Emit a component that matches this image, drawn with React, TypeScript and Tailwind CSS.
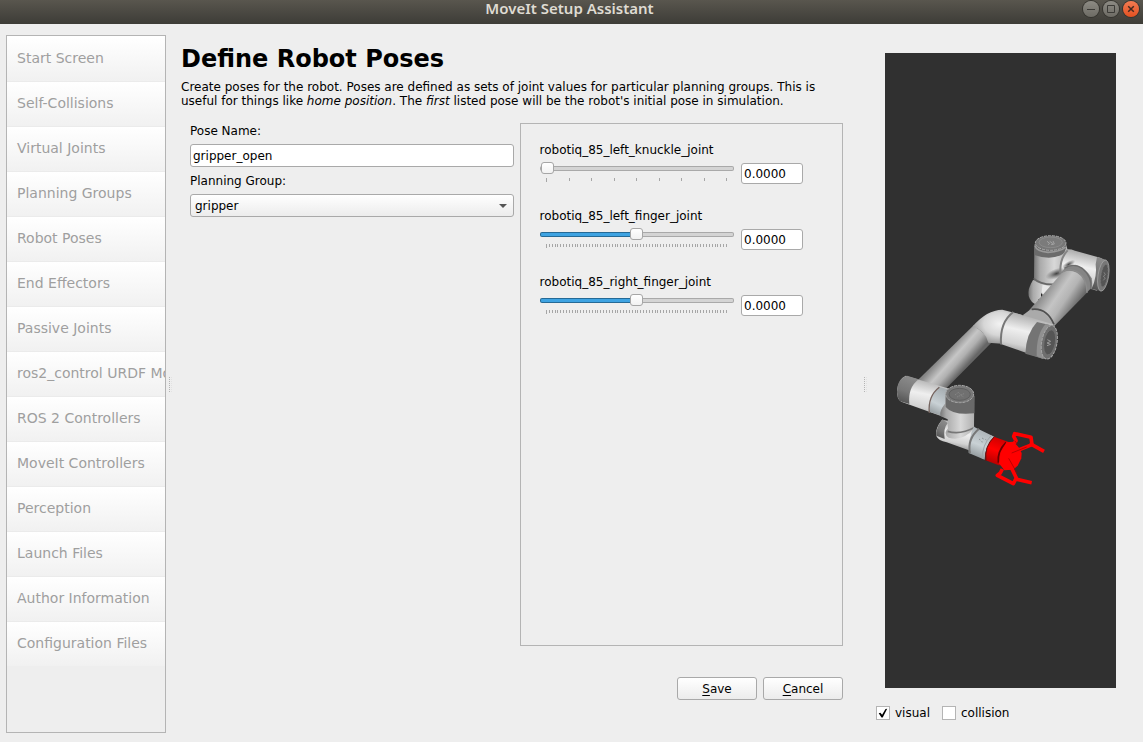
import { useState } from "react";
import type { CSSProperties } from "react";

const steps = [
  "Start Screen",
  "Self-Collisions",
  "Virtual Joints",
  "Planning Groups",
  "Robot Poses",
  "End Effectors",
  "Passive Joints",
  "ros2_control URDF Modifications",
  "ROS 2 Controllers",
  "MoveIt Controllers",
  "Perception",
  "Launch Files",
  "Author Information",
  "Configuration Files",
];

const joints = [
  { name: "robotiq_85_left_knuckle_joint", min: 0, max: 0.8, ticks: 8 },
  { name: "robotiq_85_left_finger_joint", min: -3.14, max: 3.14, ticks: 63 },
  { name: "robotiq_85_right_finger_joint", min: -3.14, max: 3.14, ticks: 63 },
];

const frame = "rounded-[3px] border border-[#a9a9a9]";
const raised = "bg-linear-to-b from-white to-[#ececec]";

function TitleBar() {
  const button =
    "flex size-4 items-center justify-center rounded-full bg-linear-to-b from-[#8d8b84] to-[#6d6b64] ring-1 ring-[#35342f]";
  return (
    <header className="grid h-6 grid-cols-[1fr_auto_1fr] items-start bg-linear-to-b from-[#59564e] to-[#3d3c37] pr-1">
      <h1 className="col-start-2 font-['Noto_Sans',sans-serif] text-[15px]/[16px] font-semibold text-[#dfdbd2]">
        MoveIt Setup Assistant
      </h1>
      <div className="flex justify-end gap-1 pt-px">
        <button aria-label="Minimize" className={button}>
          <svg viewBox="0 0 16 16" className="size-4" stroke="#3c3b37">
            <path d="M4 8.500h8" />
          </svg>
        </button>
        <button aria-label="Maximize" className={button}>
          <svg viewBox="0 0 16 16" className="size-4" fill="none" stroke="#3c3b37">
            <path d="M4.500 4.500h7v7h-7z" />
          </svg>
        </button>
        <button
          aria-label="Close"
          className="flex size-4 items-center justify-center rounded-full bg-linear-to-b from-[#f47b51] to-[#e2501f] ring-1 ring-[#35342f]"
        >
          <svg viewBox="0 0 16 16" className="size-4" stroke="#43291f" strokeWidth="1.5">
            <path d="M5.200 5.200l5.600 5.600M10.800 5.200l-5.600 5.600" />
          </svg>
        </button>
      </div>
    </header>
  );
}

function Splitter() {
  return (
    <div className="flex shrink-0 cursor-col-resize items-center pt-0.5">
      <svg viewBox="0 0 3 17" className="h-[17px] w-[3px]" fill="#b4b4b4" shapeRendering="crispEdges">
        {Array.from({ length: 8 }, (_, i) => (
          <g key={i}>
            <rect x="0" y={i * 2 + 1} width="1" height="1" />
            <rect x="2" y={i * 2 + 1} width="1" height="1" fill="#e2e2e2" />
          </g>
        ))}
      </svg>
    </div>
  );
}

function Joint({ name, min, max, ticks }: (typeof joints)[number]) {
  const [value, setValue] = useState(0);
  const fill = ((value - min) / (max - min)) * 100;
  return (
    <div>
      <label htmlFor={name}>{name}</label>
      <div className="mt-1.5 flex items-start gap-[7px]">
        <div className="min-w-0 flex-1">
          <input
            id={name}
            type="range"
            min={min}
            max={max}
            step={0.01}
            value={value}
            onChange={(e) => setValue(Number(e.target.value))}
            style={{ "--fill": `${fill}%` } as CSSProperties}
            className="-mt-px block h-3 w-full appearance-none bg-transparent [&::-webkit-slider-runnable-track]:h-[5px] [&::-webkit-slider-runnable-track]:rounded-[2px] [&::-webkit-slider-runnable-track]:border [&::-webkit-slider-runnable-track]:border-transparent [&::-webkit-slider-runnable-track]:[background:linear-gradient(to_right,#3ea3e2_var(--fill),#d4d4d4_var(--fill))_padding-box,linear-gradient(to_right,#256a96_var(--fill),#a9a9a9_var(--fill))_border-box] [&::-webkit-slider-thumb]:-mt-[5px] [&::-webkit-slider-thumb]:h-3 [&::-webkit-slider-thumb]:w-[13px] [&::-webkit-slider-thumb]:appearance-none [&::-webkit-slider-thumb]:rounded-[3px] [&::-webkit-slider-thumb]:border [&::-webkit-slider-thumb]:border-[#a6a6a6] [&::-webkit-slider-thumb]:bg-linear-to-b [&::-webkit-slider-thumb]:from-white [&::-webkit-slider-thumb]:to-[#f2f2f2]"
          />
          <svg
            viewBox="0 0 194 4"
            preserveAspectRatio="xMinYMin"
            className="mt-1 block h-1 w-full"
            fill="#a6a6a6"
            shapeRendering="crispEdges"
          >
            {Array.from({ length: ticks + 1 }, (_, i) => (
              <rect key={i} x={6 + Math.round((i * 180) / ticks)} y="0" width="1" height={i ? 3 : 4} />
            ))}
          </svg>
        </div>
        <input
          aria-label={`${name} value`}
          value={value.toFixed(4)}
          readOnly
          className={`${frame} h-[21px] w-[62px] bg-white px-0.5`}
        />
      </div>
    </div>
  );
}

function Check({ label, defaultChecked }: { label: string; defaultChecked?: boolean }) {
  return (
    <label className="flex items-center gap-[5px]">
      <span className="grid">
        <input
          type="checkbox"
          defaultChecked={defaultChecked}
          className="peer col-start-1 row-start-1 size-3.5 appearance-none border border-[#b4b4b4] bg-white"
        />
        <svg
          viewBox="0 0 14 14"
          className="pointer-events-none invisible col-start-1 row-start-1 size-3.5 peer-checked:visible"
        >
          <path d="M2.700 7.300l1.700-.6 1.700 2 3.400-5.700 1.700-.2-4.500 8.700H5.500z" fill="#000" />
        </svg>
      </span>
      {label}
    </label>
  );
}

function Robot() {
  return (
    <svg viewBox="0 -516 693 1905" className="h-full w-full" role="img" aria-label="Robot model">
      <defs>
        <linearGradient id="upright" x1="0" x2="1">
          <stop offset="0" stopColor="#777" />
          <stop offset=".18" stopColor="#aaa" />
          <stop offset=".6" stopColor="#d8d8d8" />
          <stop offset="1" stopColor="#b0b0b0" />
        </linearGradient>
        <linearGradient id="lying" x1=".35" y1="0" x2=".1" y2="1">
          <stop offset="0" stopColor="#aaa" />
          <stop offset=".35" stopColor="#efefef" />
          <stop offset=".65" stopColor="#d2d2d2" />
          <stop offset="1" stopColor="#666" />
        </linearGradient>
        <linearGradient id="upper" gradientUnits="userSpaceOnUse" x1="483" y1="196" x2="572" y2="256">
          <stop offset="0" stopColor="#8f8f8f" />
          <stop offset=".35" stopColor="#c4c4c4" />
          <stop offset=".6" stopColor="#b4b4b4" />
          <stop offset="1" stopColor="#5c5c5c" />
        </linearGradient>
        <linearGradient id="fore" gradientUnits="userSpaceOnUse" x1="180" y1="382" x2="236" y2="432">
          <stop offset="0" stopColor="#858585" />
          <stop offset=".4" stopColor="#c6c6c6" />
          <stop offset=".65" stopColor="#b0b0b0" />
          <stop offset="1" stopColor="#666" />
        </linearGradient>
        <linearGradient id="band" x1=".4" y1="0" x2=".1" y2="1">
          <stop offset="0" stopColor="#8a8a8a" />
          <stop offset=".5" stopColor="#777" />
          <stop offset="1" stopColor="#4d4d4d" />
        </linearGradient>
        <radialGradient id="bend" cx=".55" cy=".4" r=".65">
          <stop offset="0" stopColor="#f2f2f2" />
          <stop offset=".5" stopColor="#d6d6d6" />
          <stop offset="1" stopColor="#858585" />
        </radialGradient>
        <radialGradient id="shade">
          <stop offset="0" stopColor="#333" stopOpacity=".9" />
          <stop offset="1" stopColor="#555" stopOpacity="0" />
        </radialGradient>
        <linearGradient id="steel" x1=".4" y1="0" x2=".1" y2="1">
          <stop offset="0" stopColor="#a9b0b4" />
          <stop offset=".5" stopColor="#c9d1d5" />
          <stop offset="1" stopColor="#81888b" />
        </linearGradient>
        <linearGradient id="flange" x1=".5" y1="0" x2=".2" y2="1">
          <stop offset="0" stopColor="#c00" />
          <stop offset=".45" stopColor="#f00" />
          <stop offset="1" stopColor="#a00" />
        </linearGradient>
      </defs>

      {/* base */}
      <path d="M444 165Q427 192 431 213Q438 236 457 239L510 190L508 175Z" fill="url(#upright)" />
      <path d="M473 178Q490 187 505 183L480 215L470 200Z" fill="#e8e8e8" />
      <path d="M468 204v15l-9 5 6 8 14-17z" fill="#292929" />

      {/* shoulder */}
      <path d="M538 75Q552 70 570 77L648 99Q665 108 659 150Q650 190 635 197L555 170L505 155Z" fill="url(#lying)" />
      <path d="M636 96L665 105L648 199L620 191Q637 155 632 118Z" fill="url(#band)" />
      <path d="M448 62L447 165Q468 184 510 180L530 160L525 132Q527 105 548 75L543 58Z" fill="url(#upright)" />
      <ellipse cx="514" cy="146" rx="34" ry="15" transform="rotate(-20 514 146)" fill="url(#shade)" />
      <ellipse cx="551" cy="118" rx="22" ry="9" transform="rotate(-30 551 118)" fill="url(#shade)" />
      <path d="M548 76Q524 100 526 145" fill="none" stroke="#858585" strokeWidth="6" />
      <path d="M446 160Q467 180 509 178" fill="none" stroke="#686868" strokeWidth="5" />
      <path d="M448 57L448 90Q493 106 527 91Q545 83 543 55Z" fill="#6b6b6b" />
      <path d="M450 62Q454 79 489 82Q528 80 542 66" fill="none" stroke="#999" strokeWidth="5" />
      <ellipse cx="497" cy="54" rx="46" ry="22" fill="#777" stroke="#aaa" strokeWidth="3" strokeDasharray="9 3" />
      <ellipse cx="497" cy="52" rx="35" ry="16" fill="#7b7b7b" stroke="#929292" strokeWidth="2" />
      <path d="M486 49l8 6-5 4M494 49l9 6-5 4M504 48l4 9-8 2" fill="none" stroke="#a2a2a2" strokeWidth="3" />
      <ellipse cx="655" cy="152" rx="16" ry="47" transform="rotate(9 655 152)" fill="#777" stroke="#aaa" strokeWidth="2" />
      <ellipse cx="658" cy="152" rx="10" ry="34" transform="rotate(9 658 152)" fill="#555" stroke="#777" strokeWidth="2" strokeDasharray="6 3" />
      <path d="M657 142l4 7-6 5 6 5-6 7" fill="none" stroke="#999" strokeWidth="2" />

      {/* upper arm */}
      <path d="M528 143Q542 120 571 119Q604 129 620 160Q628 193 596 207L580 204Z" fill="#858585" />
      <path d="M528 147Q546 130 576 143Q606 160 605 204L508 303L420 270Z" fill="url(#upper)" />
      <path d="M533 140Q553 128 576 140Q606 158 606 204" fill="none" stroke="#8c8c8c" strokeWidth="4" />
      <path d="M538 130Q565 112 593 131Q622 155 618 193" fill="none" stroke="#6c6c6c" strokeWidth="4" />
      <path d="M413 271Q432 255 446 251Q486 258 507 300L480 314Z" fill="#aaa" />
      <path d="M440 253Q485 247 507 298" fill="none" stroke="#4f4f4f" strokeWidth="5" />

      {/* forearm and elbow */}
      <path d="M266 301L98 466L142 492L181 493L325 347Z" fill="url(#fore)" />
      <path d="M263 304Q305 255 352 254L410 269L382 360L350 356L310 353Q303 320 263 304Z" fill="url(#bend)" />
      <path d="M383 262L505 298L475 402L345 356Q344 294 383 262Z" fill="url(#lying)" />
      <path d="M385 261Q344 291 348 358" fill="none" stroke="#777" strokeWidth="6" />
      <path d="M456 291L510 304L476 402L421 386Q423 326 456 291Z" fill="#747474" />
      <path d="M482 297Q453 328 455 394L475 401L509 306Z" fill="#909090" />
      <ellipse cx="493" cy="352" rx="23" ry="51" transform="rotate(10 493 352)" fill="#6e6e6e" stroke="#a7a7a7" strokeWidth="3" strokeDasharray="9 3" />
      <ellipse cx="494" cy="352" rx="17" ry="38" transform="rotate(10 494 352)" fill="#555" stroke="#777" strokeWidth="2" />
      <path d="M487 344l10 5-11 5 11 4-11 4" fill="none" stroke="#999" strokeWidth="3" />

      {/* first wrist */}
      <path d="M62 452L198 493L201 585L49 530Q35 523 36 495Q42 461 62 452Z" fill="url(#lying)" />
      <path d="M66 452L101 463Q68 488 73 537L46 529Q33 517 37 485Q44 458 66 452Z" fill="url(#band)" />
      <path d="M163 486L188 493L190 578L135 561Q130 518 163 486Z" fill="url(#steel)" />
      <path d="M163 487Q128 514 133 564" fill="none" stroke="#75645f" strokeWidth="4" />

      {/* second wrist */}
      <path d="M171 584Q149 611 154 633Q160 647 185 652L260 679L282 628L244 596Z" fill="url(#lying)" />
      <path d="M173 583Q151 608 154 632L179 642Q174 611 188 594Z" fill="url(#band)" />
      <path d="M181 513L181 535Q162 559 166 573L188 583L189 610Q173 627 191 638Q234 651 267 609L268 512Z" fill="url(#upright)" />
      <path d="M182 508L182 546Q204 572 268 565L267 508Z" fill="#696969" />
      <ellipse cx="224" cy="507" rx="42" ry="26" fill="#797979" stroke="#aaa" strokeWidth="3" strokeDasharray="9 3" />
      <ellipse cx="224" cy="508" rx="32" ry="18" fill="#707070" stroke="#606060" strokeWidth="3" />
      <path d="M210 510l10-8 8 8 11-5M216 516l11-5 8 4" fill="none" stroke="#8f8f8f" strokeWidth="2" strokeDasharray="4 2" />
      <path d="M188 619Q225 631 270 607" fill="none" stroke="#777" strokeWidth="5" />

      {/* third wrist */}
      <path d="M266 605L328 635Q300 660 299 704L251 684Q249 644 266 605Z" fill="url(#steel)" />
      <path d="M282 611Q246 642 255 684" fill="none" stroke="#777" strokeWidth="6" />
      <path d="M319 631Q291 660 292 701" fill="none" stroke="#9da4a7" strokeWidth="3" />
      <path d="M282 642l4 3m5-6 5 3m-7 8 4 1m8-8 3 2" stroke="#8d9396" strokeWidth="3" />

      {/* gripper */}
      <path d="M327 635L371 651L375 720L341 721L302 706Q298 661 327 635Z" fill="url(#flange)" />
      <path d="M328 635Q297 665 303 708" fill="none" stroke="#6a1010" strokeWidth="3" />
      <path d="M363 652Q336 679 340 713" fill="none" stroke="#600" strokeWidth="5" />
      <path
        d="M364 652L386 650L402 668L410 684L409 700L398 722L384 734L358 736L342 715L347 684Z"
        fill="#f00"
      />
      <g fill="none" stroke="#f00" strokeWidth="11" strokeLinejoin="round">
        <path d="M388 655L393 647L386 634L389 626L438 637L441 659L385 681" />
        <path d="M434 655L477 679" />
        <path d="M352 732L346 744L337 751L385 776L394 759L370 709" />
        <path d="M392 762L440 773" />
      </g>
      <path d="M380 684L425 666M371 700L396 744M389 647L400 660" stroke="#900" strokeWidth="2" />
    </svg>
  );
}

export default function App() {
  return (
    <div className="flex min-h-screen flex-col bg-[#eee] font-['DejaVu_Sans',sans-serif] text-xs/[14px] text-black">
      <TitleBar />
      <div className="flex flex-1">
        <nav className="mt-[11px] mb-[9px] ml-1.5 w-40 shrink-0 overflow-hidden border border-[#b4b4b4]">
          {steps.map((step) => (
            <button
              key={step}
              disabled
              className="block h-[45px] w-full overflow-hidden border-t border-[#ebebeb] bg-linear-to-b from-white to-[#f1f1f1] pb-0.5 pl-2.5 text-left text-sm whitespace-nowrap text-[#9f9f9f] first:border-white"
            >
              {step}
            </button>
          ))}
        </nav>
        <div className="flex w-[15px] shrink-0 pl-[3px]">
          <Splitter />
        </div>

        <main className="flex min-w-0 flex-1 flex-col pt-[21px] pb-[42px]">
          <h2 className="text-2xl/7 font-bold">Define Robot Poses</h2>
          <p className="mt-[7px] pr-5">
            Create poses for the robot. Poses are defined as sets of joint values for particular planning groups. This is
            useful for things like <i>home position</i>. The <i>first</i> listed pose will be the robot's initial pose in
            simulation.
          </p>
          <div className="mt-[15px] grid flex-1 grid-cols-2 gap-1.5 pl-[9px]">
            <form className="flex min-w-0 flex-col gap-[7px] pt-px">
              <label htmlFor="pose">Pose Name:</label>
              <input
                id="pose"
                defaultValue="gripper_open"
                className={`${frame} -mt-px h-[23px] w-full bg-white px-0.5`}
              />
              <label htmlFor="group">Planning Group:</label>
              <div className="-mt-px grid items-center">
                <select
                  id="group"
                  className={`${frame} ${raised} col-start-1 row-start-1 h-[23px] w-full appearance-none px-1`}
                >
                  <option>gripper</option>
                </select>
                <svg
                  viewBox="0 0 8 4"
                  className="pointer-events-none col-start-1 row-start-1 mr-[7px] h-1 w-2 justify-self-end"
                  fill="#555"
                >
                  <path d="M0 0h8L4 4z" />
                </svg>
              </div>
            </form>
            <section className="flex min-w-0 flex-col gap-[25px] border border-[#b4b4b4] pt-[19px] pr-[39px] pl-[19px]">
              {joints.map((joint) => (
                <Joint key={joint.name} {...joint} />
              ))}
            </section>
          </div>
          <div className="mt-[31px] flex justify-end gap-1.5">
            <button className={`${frame} ${raised} h-[23px] w-20`}>
              <u className="underline-offset-2">S</u>ave
            </button>
            <button className={`${frame} ${raised} h-[23px] w-20`}>
              <u className="underline-offset-2">C</u>ancel
            </button>
          </div>
        </main>

        <div className="flex w-[33px] shrink-0 justify-center pl-3">
          <Splitter />
        </div>
        <aside className="mr-[27px] flex w-60 shrink-0 flex-col pt-[29px] pb-[22px]">
          <div className="ml-[9px] flex min-h-0 flex-1 basis-0 bg-[#303030]">
            <Robot />
          </div>
          <div className="mt-[18px] flex gap-3">
            <Check label="visual" defaultChecked />
            <Check label="collision" />
          </div>
        </aside>
      </div>
    </div>
  );
}
